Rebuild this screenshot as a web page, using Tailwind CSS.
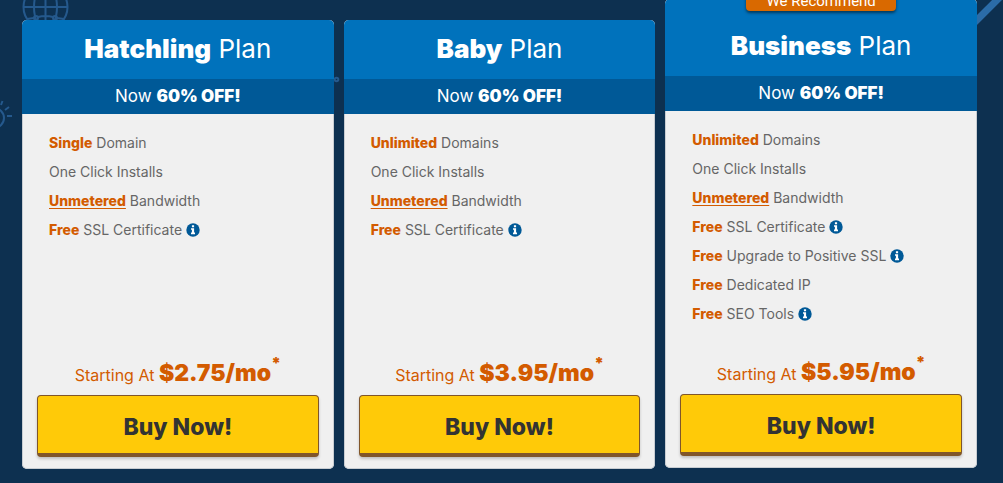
<!DOCTYPE html>
<html lang="en">
<head>
<meta charset="utf-8">
<title>Hosting plans</title>
<script src="https://cdn.jsdelivr.net/npm/@tailwindcss/browser@4"></script>
</head>
<body class="bg-[#0d3050] font-['Inter',sans-serif]">
<svg width="0" height="0" class="absolute" aria-hidden="true">
  <symbol id="info" viewBox="0 0 14 14">
    <circle cx="7" cy="7" r="6.7" fill="#005997"/>
    <path fill="#fff" d="M5.9 2.2h2.2v2H5.9zM5 5.2h3.1v4.4H9v1.6H5V9.600h.9V6.800H5z"/>
  </symbol>
</svg>
<div class="relative min-h-screen overflow-hidden">
  <div class="absolute inset-0" aria-hidden="true">
    <svg class="absolute left-0 top-0" width="100" height="140" fill="none" stroke="#25598d" stroke-width="2">
      <circle cx="45.500" cy="7" r="22"/>
      <ellipse cx="45.500" cy="7" rx="11.500" ry="22"/>
      <path d="M45.500-15v44M23.500 7h44M38 17q7.500-2 15 0M27 19l7-1M57 18l7 1"/>
      <circle cx="36" cy="18" r="2"/><circle cx="55" cy="18" r="2"/>
      <circle cx="-6" cy="118" r="10"/>
      <path d="M1 105l1.500-4M5 110l4-3M7 116h5"/>
    </svg>
    <svg class="absolute left-[330px] top-[74px]" width="12" height="12" fill="none" stroke="#25598d" stroke-width="2"><circle cx="6.500" cy="5.500" r="1.800"/></svg>
    <svg class="absolute right-0 top-0" width="30" height="30" stroke="#2b6ca8" stroke-width="7"><path d="M-2 26L30-6"/></svg>
  </div>
  <main class="relative grid grid-cols-3 items-start gap-[10px] pl-[22px] pr-[26px]">

    <section class="mt-5 flex min-h-[449px] flex-col rounded-[5px] bg-[#f0f0f0] shadow-[inset_0_0_0_1px_#c8cdd2]">
      <h2 class="rounded-t-[5px] bg-[#0072bc] pb-[13px] pt-[11px] text-center text-[26px] leading-[35px] text-white"><b class="font-black">Hatchling</b> Plan</h2>
      <p class="bg-[#005997] text-center text-[17px] leading-[35px] text-white">Now <b class="font-black">60% OFF!</b></p>
      <ul class="px-[27px] pt-[14px] text-[14px] leading-[29px] text-[#666]">
        <li><b class="font-extrabold text-[#d35b00]">Single</b> Domain</li>
        <li>One Click Installs</li>
        <li><b class="font-extrabold text-[#d35b00] underline underline-offset-2">Unmetered</b> Bandwidth</li>
        <li class="flex items-center gap-1"><span><b class="font-extrabold text-[#d35b00]">Free</b> SSL Certificate</span><svg class="size-[14px]" role="img" aria-label="More information"><use href="#info"/></svg></li>
      </ul>
      <div class="mt-auto px-[15px] pb-3 text-center">
        <p class="mb-[2px] text-[16px] leading-[36px] text-[#d35b00]">Starting At <b class="text-[23px] font-black">$2.75/mo<sup class="-top-3 text-[16px]">*</sup></b></p>
        <button type="button" class="h-[62px] w-full rounded-[4px] border border-b-4 border-[#80562a] bg-[#ffca08] pt-[6px] text-[23px] font-extrabold text-[#333] shadow-[0_2px_3px_rgba(0,0,0,0.2)]">Buy Now!</button>
      </div>
    </section>

    <section class="mt-5 flex min-h-[449px] flex-col rounded-[5px] bg-[#f0f0f0] shadow-[inset_0_0_0_1px_#c8cdd2]">
      <h2 class="rounded-t-[5px] bg-[#0072bc] pb-[13px] pt-[11px] text-center text-[26px] leading-[35px] text-white"><b class="font-black">Baby</b> Plan</h2>
      <p class="bg-[#005997] text-center text-[17px] leading-[35px] text-white">Now <b class="font-black">60% OFF!</b></p>
      <ul class="px-[27px] pt-[14px] text-[14px] leading-[29px] text-[#666]">
        <li><b class="font-extrabold text-[#d35b00]">Unlimited</b> Domains</li>
        <li>One Click Installs</li>
        <li><b class="font-extrabold text-[#d35b00] underline underline-offset-2">Unmetered</b> Bandwidth</li>
        <li class="flex items-center gap-1"><span><b class="font-extrabold text-[#d35b00]">Free</b> SSL Certificate</span><svg class="size-[14px]" role="img" aria-label="More information"><use href="#info"/></svg></li>
      </ul>
      <div class="mt-auto px-[15px] pb-3 text-center">
        <p class="mb-[2px] text-[16px] leading-[36px] text-[#d35b00]">Starting At <b class="text-[23px] font-black">$3.95/mo<sup class="-top-3 text-[16px]">*</sup></b></p>
        <button type="button" class="h-[62px] w-full rounded-[4px] border border-b-4 border-[#80562a] bg-[#ffca08] pt-[6px] text-[23px] font-extrabold text-[#333] shadow-[0_2px_3px_rgba(0,0,0,0.2)]">Buy Now!</button>
      </div>
    </section>

    <section class="relative -mt-px flex min-h-[469px] flex-col rounded-[5px] bg-[#f0f0f0] shadow-[inset_0_0_0_1px_#c8cdd2]">
      <div class="absolute inset-x-0 -top-[10px] mx-auto w-[150px] rounded-[4px] bg-[#d96900] pt-[2px] text-center font-['Roboto',sans-serif] text-[15px] leading-[20px] text-white shadow-[0_2px_3px_rgba(0,0,0,0.5)]">We Recommend</div>
      <h2 class="rounded-t-[5px] bg-[#0072bc] pb-[13px] pt-[29px] text-center text-[26px] leading-[35px] text-white"><b class="font-black">Business</b> Plan</h2>
      <p class="bg-[#005997] text-center text-[17px] leading-[35px] text-white">Now <b class="font-black">60% OFF!</b></p>
      <ul class="px-[27px] pt-[14px] text-[14px] leading-[29px] text-[#666]">
        <li><b class="font-extrabold text-[#d35b00]">Unlimited</b> Domains</li>
        <li>One Click Installs</li>
        <li><b class="font-extrabold text-[#d35b00] underline underline-offset-2">Unmetered</b> Bandwidth</li>
        <li class="flex items-center gap-1"><span><b class="font-extrabold text-[#d35b00]">Free</b> SSL Certificate</span><svg class="size-[14px]" role="img" aria-label="More information"><use href="#info"/></svg></li>
        <li class="flex items-center gap-1"><span><b class="font-extrabold text-[#d35b00]">Free</b> Upgrade to Positive SSL</span><svg class="size-[14px]" role="img" aria-label="More information"><use href="#info"/></svg></li>
        <li><b class="font-extrabold text-[#d35b00]">Free</b> Dedicated IP</li>
        <li class="flex items-center gap-1"><span><b class="font-extrabold text-[#d35b00]">Free</b> SEO Tools</span><svg class="size-[14px]" role="img" aria-label="More information"><use href="#info"/></svg></li>
      </ul>
      <div class="mt-auto px-[15px] pb-3 text-center">
        <p class="mb-[2px] text-[16px] leading-[36px] text-[#d35b00]">Starting At <b class="text-[23px] font-black">$5.95/mo<sup class="-top-3 text-[16px]">*</sup></b></p>
        <button type="button" class="h-[62px] w-full rounded-[4px] border border-b-4 border-[#80562a] bg-[#ffca08] pt-[6px] text-[23px] font-extrabold text-[#333] shadow-[0_2px_3px_rgba(0,0,0,0.2)]">Buy Now!</button>
      </div>
    </section>

  </main>
</div>
</body>
</html>
